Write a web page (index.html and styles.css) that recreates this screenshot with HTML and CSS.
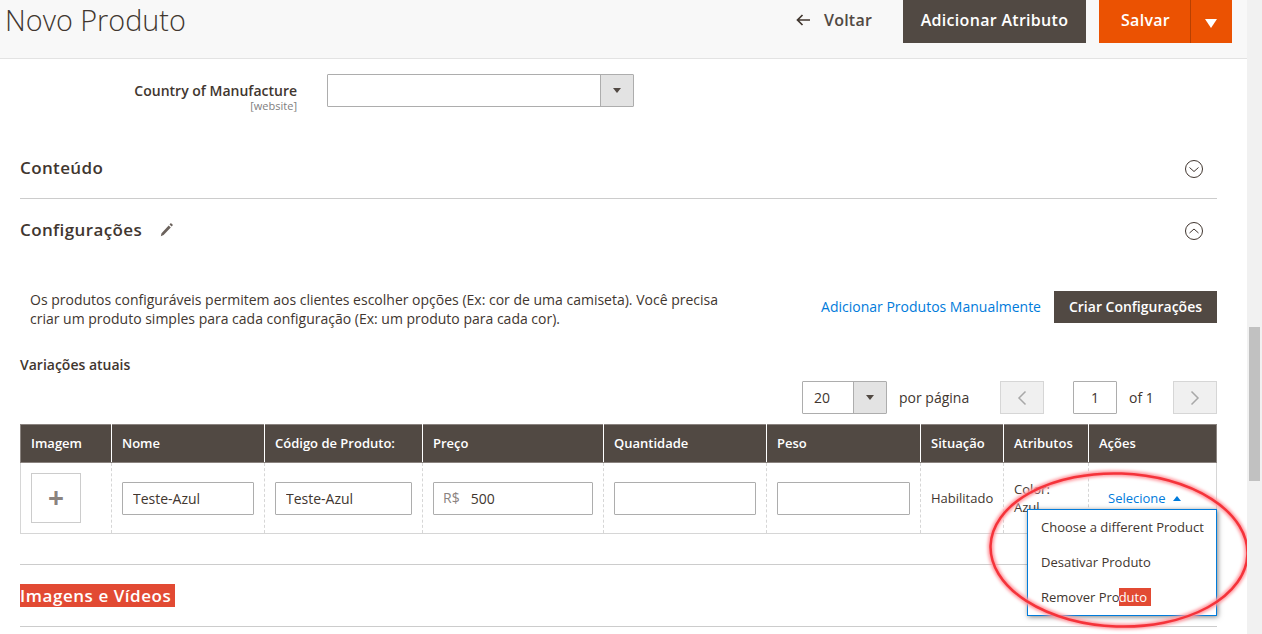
FILE: index.html
```html
<!DOCTYPE html>
<html lang="en">
<head>
  <meta charset="UTF-8" />
  <title>Novo Produto</title>
  <link rel="stylesheet" href="styles.css">
</head>
<body>

  <div class="page">
    <div class="page-main">

      <header class="page-header">
        <h1>Novo Produto</h1>
        <div class="page-actions">
          <a class="back-link">
            <svg width="14" height="12" viewBox="0 0 14 12"><path d="M6.500 1 1.500 6l5 5M1.500 6H14" fill="none" stroke="#41362f" stroke-width="1.700"/></svg>
            Voltar
          </a>
          <button class="btn-header btn-dark">Adicionar Atributo</button>
          <div class="save-group">
            <button class="btn-header btn-save">Salvar</button>
            <button class="btn-header btn-save-toggle"><span class="caret-white"></span></button>
          </div>
        </div>
      </header>

      <div class="content">
        <div class="field-row">
          <div class="field-label">
            <strong>Country of Manufacture</strong>
            <span>[website]</span>
          </div>
          <div class="select select-wide"><span class="select-value"></span><span class="select-btn"><i></i></span></div>
        </div>

        <div class="section section-closed">
          <h2>Conteúdo</h2>
          <svg class="toggle" width="20" height="20" viewBox="0 0 20 20"><circle cx="10" cy="10" r="8.500" fill="none" stroke="#41362f" stroke-width="1"/><path d="M5.500 8.500 10 12.500l4.500-4" fill="none" stroke="#41362f" stroke-width="1"/></svg>
        </div>

        <div class="section section-open">
          <h2>Configurações</h2>
          <svg class="pencil" width="14" height="16" viewBox="0 0 14 16"><path d="M.8 15.200l.7-3 7.200-7.800 2.100 2-7.200 7.700zM9.500 3.500 10.900 2l2.100 2-1.400 1.500z" fill="#6b625c"/></svg>
          <svg class="toggle" width="20" height="20" viewBox="0 0 20 20"><circle cx="10" cy="10" r="8.500" fill="none" stroke="#41362f" stroke-width="1"/><path d="M5.500 12 10 8l4.500 4" fill="none" stroke="#41362f" stroke-width="1"/></svg>
        </div>

        <div class="config-intro">
          <p>Os produtos configuráveis permitem aos clientes escolher opções (Ex: cor de uma camiseta). Você precisa criar um produto simples para cada configuração (Ex: um produto para cada cor).</p>
          <div class="config-actions">
            <a class="link">Adicionar Produtos Manualmente</a>
            <button class="btn-create">Criar Configurações</button>
          </div>
        </div>

        <h3 class="variations-title">Variações atuais</h3>

        <div class="pager">
          <div class="select select-small"><span class="select-value">20</span><span class="select-btn"><i></i></span></div>
          <span class="per-page">por página</span>
          <button class="page-btn page-prev"><svg width="10" height="16" viewBox="0 0 10 16"><path d="M8.500 1.500 2 8l6.500 6.500" fill="none" stroke="#a8a8a8" stroke-width="1.500"/></svg></button>
          <input class="page-input" type="text" value="1" />
          <span class="page-total">of 1</span>
          <button class="page-btn page-next"><svg width="10" height="16" viewBox="0 0 10 16"><path d="M1.500 1.500 8 8l-6.500 6.500" fill="none" stroke="#a8a8a8" stroke-width="1.500"/></svg></button>
        </div>

        <table class="grid">
          <colgroup>
            <col class="c-img"><col class="c-name"><col class="c-sku"><col class="c-price"><col class="c-qty"><col class="c-weight"><col class="c-status"><col class="c-attr"><col class="c-act">
          </colgroup>
          <thead>
            <tr>
              <th>Imagem</th>
              <th>Nome</th>
              <th>Código de Produto:</th>
              <th>Preço</th>
              <th>Quantidade</th>
              <th>Peso</th>
              <th>Situação</th>
              <th>Atributos</th>
              <th>Ações</th>
            </tr>
          </thead>
          <tbody>
            <tr>
              <td><div class="img-add">+</div></td>
              <td><input type="text" value="Teste-Azul" /></td>
              <td><input type="text" value="Teste-Azul" /></td>
              <td>
                <div class="price-input"><span>R$</span><input type="text" value="500" /></div>
              </td>
              <td><input type="text" /></td>
              <td><input type="text" /></td>
              <td>Habilitado</td>
              <td class="attr-cell">Color:<br>Azul</td>
              <td class="action-cell">
                <a class="link action-toggle">Selecione <span class="caret-up"></span></a>
                <ul class="action-menu">
                  <li>Choose a different Product</li>
                  <li>Desativar Produto</li>
                  <li>Remover Pro<span class="mark-inline">duto</span></li>
                </ul>
              </td>
            </tr>
          </tbody>
        </table>

        <div class="section section-images">
          <h2><span class="mark">Imagens e Vídeos</span></h2>
        </div>
      </div>

      <svg class="annotation" width="280" height="170" viewBox="0 0 280 170">
        <defs><filter id="soft"><feGaussianBlur stdDeviation="1.500"/></filter></defs>
        <ellipse cx="140" cy="85" rx="128.500" ry="76.500" transform="rotate(2 140 85)" fill="none" stroke="#ff9aa0" stroke-width="6" filter="url(#soft)"/>
        <ellipse cx="140" cy="85" rx="128.500" ry="76.500" transform="rotate(2 140 85)" fill="none" stroke="#f5333a" stroke-width="2.500"/>
      </svg>
    </div>

    <div class="scrollbar"><div class="scroll-thumb"></div></div>
  </div>

</body>
</html>
```

FILE: styles.css
```css
* {
  margin: 0;
  padding: 0;
  box-sizing: border-box;
  font-family: 'Open Sans', 'Noto Sans', sans-serif;
}

html, body {
  height: 634px;
  overflow: hidden;
}

body {
  background: #fff;
  color: #41362f;
  font-size: 14px;
}

button {
  border: none;
  cursor: pointer;
}

.page {
  display: flex;
  height: 634px;
}

.page-main {
  position: relative;
  flex: 1;
  min-width: 0;
  overflow: hidden;
}

/* header */

.page-header {
  display: flex;
  justify-content: space-between;
  height: 59px;
  padding: 0 15px 0 5px;
  background: #f8f8f8;
  border-bottom: 1px solid #e3e3e3;
}

.page-header h1 {
  font-size: 28.8px;
  font-weight: 300;
  line-height: 39px;
  color: #41362f;
}

.page-actions {
  display: flex;
  align-items: flex-start;
}

.back-link {
  display: flex;
  align-items: center;
  gap: 14px;
  height: 40px;
  margin-right: 31px;
  font-size: 16px;
  font-weight: 600;
  color: #514943;
  letter-spacing: .2px;
}

.btn-header {
  height: 43px;
  padding-bottom: 3px;
  font-size: 16px;
  font-weight: 600;
  color: #fff;
  letter-spacing: .3px;
}

.btn-dark {
  width: 183px;
  margin-right: 13px;
  background: #514943;
}

.save-group {
  display: flex;
}

.btn-save {
  width: 91px;
  padding-left: 2px;
  background: #eb5202;
}

.btn-save-toggle {
  width: 42px;
  padding: 1px 2px 0 0;
  background: #eb5202;
  border-left: 1px solid #b84002;
}

.caret-white {
  display: inline-block;
  border-top: 9px solid #fff;
  border-left: 6px solid transparent;
  border-right: 6px solid transparent;
}

/* form */

.content {
  padding: 0 30px 0 20px;
}

.field-row {
  display: flex;
  gap: 30px;
  margin-top: 15px;
}

.field-label {
  display: flex;
  flex-direction: column;
  align-items: flex-end;
  width: 277px;
  padding-top: 7px;
}

.field-label strong {
  font-size: 14px;
  font-weight: 600;
  line-height: 19px;
  color: #41362f;
}

.field-label span {
  font-size: 11px;
  line-height: 12px;
  color: #808080;
}

.select {
  display: flex;
  height: 33px;
  background: #fff;
  border: 1px solid #adadad;
  border-radius: 1px;
}

.select-wide {
  width: 307px;
}

.select-small {
  width: 85px;
}

.select-value {
  flex: 1;
  padding-left: 11px;
  line-height: 31px;
}

.select-btn {
  display: flex;
  align-items: center;
  justify-content: center;
  width: 33px;
  background: #e3e3e3;
  border-left: 1px solid #adadad;
}

.select-btn i {
  border-top: 5px solid #514943;
  border-left: 4px solid transparent;
  border-right: 4px solid transparent;
}

/* sections */

.section {
  display: flex;
  align-items: center;
  position: relative;
}

.section h2 {
  font-size: 17px;
  font-weight: 600;
  color: #41362f;
  letter-spacing: .38px;
}

.section-closed {
  height: 62px;
  margin-top: 25px;
  border-bottom: 1px solid #cccccc;
}

.section-closed h2 {
  padding-bottom: 1px;
}

.section-open {
  height: 62px;
}

.section-open h2 {
  padding-bottom: 2px;
}

.section-open .pencil {
  margin-left: 18px;
  margin-bottom: 2px;
}

.toggle {
  margin: 2px 13px 0 auto;
}

.config-intro {
  display: flex;
  justify-content: space-between;
  align-items: center;
  margin-top: 30px;
  padding-left: 10px;
  height: 32px;
}

.config-intro p {
  width: 710px;
  padding-top: 4px;
  line-height: 19px;
  color: #41362f;
}

.config-actions {
  display: flex;
  align-items: center;
  gap: 13px;
}

.link {
  color: #007bdb;
}

.config-actions .link {
  padding-bottom: 2px;
}

.btn-create {
  width: 163px;
  height: 32px;
  padding-bottom: 2px;
  background: #514943;
  color: #fff;
  font-size: 14px;
  font-weight: 600;
}

.variations-title {
  margin-top: 32px;
  font-size: 14px;
  font-weight: 600;
  line-height: 20px;
  color: #41362f;
}

/* pager */

.pager {
  display: flex;
  align-items: center;
  margin-top: 6px;
  padding-left: 782px;
  height: 33px;
}

.per-page {
  width: 113px;
  padding-left: 12px;
  color: #41362f;
}

.page-btn {
  display: flex;
  align-items: center;
  justify-content: center;
  width: 44px;
  height: 33px;
  background: #f0f0f0;
  border: 1px solid #d6d6d6;
}

.page-input {
  width: 44px;
  height: 33px;
  margin-left: 29px;
  text-align: center;
  font-size: 14px;
  color: #41362f;
  border: 1px solid #adadad;
  border-radius: 1px;
}

.page-total {
  width: 56px;
  padding-left: 12px;
  color: #41362f;
}

/* grid */

.grid {
  width: 1196px;
  margin-top: 10px;
  table-layout: fixed;
  border-collapse: collapse;
}

.c-img { width: 91px; }
.c-name { width: 153px; }
.c-sku { width: 158px; }
.c-price { width: 181px; }
.c-qty { width: 163px; }
.c-weight { width: 154px; }
.c-status { width: 83px; }
.c-attr { width: 85px; }
.c-act { width: 128px; }

.grid th {
  height: 38px;
  padding: 0 10px 2px;
  text-align: left;
  font-size: 13px;
  font-weight: 600;
  color: #fff;
  background: #514943;
  border: 1px solid #8a837f;
  border-left-color: #fff;
  border-right-color: #fff;
}

.grid th:first-child {
  border-left-color: #8a837f;
}

.grid th:last-child {
  border-right-color: #8a837f;
}

.grid td {
  height: 71px;
  padding: 0 10px;
  font-size: 13px;
  line-height: 18px;
  color: #41362f;
  border: 1px solid #d6d6d6;
  border-left-style: dashed;
  border-right-style: dashed;
}

.grid td:first-child {
  border-left-style: solid;
}

.grid td:last-child {
  border-right-style: solid;
}

.grid td input {
  width: 100%;
  height: 33px;
  padding: 0 10px;
  font-size: 14px;
  color: #41362f;
  border: 1px solid #adadad;
  border-radius: 1px;
  outline: none;
}

.img-add {
  width: 50px;
  height: 50px;
  font-size: 28px;
  font-weight: 700;
  line-height: 46px;
  text-align: center;
  color: #8a837f;
  border: 1px solid #ccc;
}

.price-input {
  display: flex;
  align-items: center;
  height: 33px;
  border: 1px solid #adadad;
  border-radius: 1px;
}

.price-input span {
  padding-left: 9px;
  font-size: 14px;
  color: #8a837f;
}

.grid td .price-input input {
  flex: 1;
  min-width: 0;
  height: 31px;
  padding-left: 11px;
  border: none;
}

.grid td.action-cell {
  position: relative;
  padding-left: 19px;
}

.action-toggle {
  font-size: 13px;
  white-space: nowrap;
}

.caret-up {
  display: inline-block;
  margin: 0 0 2px 4px;
  border-bottom: 5px solid #007bdb;
  border-left: 4px solid transparent;
  border-right: 4px solid transparent;
}

.action-menu {
  position: absolute;
  top: 46px;
  right: -1px;
  width: 190px;
  height: 107px;
  padding-top: 1px;
  list-style: none;
  background: #fff;
  border: 1px solid #007bdb;
  box-shadow: 1px 1px 5px rgba(0, 0, 0, 0.5);
  z-index: 2;
}

.action-menu li {
  height: 35px;
  padding-left: 13px;
  font-size: 13px;
  line-height: 33px;
  color: #41362f;
  white-space: nowrap;
}

.mark-inline {
  display: inline-block;
  margin-left: -1px;
  line-height: 18px;
  padding-right: 4px;
  background: #e24a33;
  color: #fff;
}

.section-images {
  height: 63px;
  margin-top: 30px;
  border-top: 1px solid #cccccc;
  border-bottom: 1px solid #cccccc;
}

.section-images h2 {
  letter-spacing: .55px;
}

.mark {
  display: inline-block;
  line-height: 23px;
  padding-right: 4px;
  background: #e24a33;
  color: #fff;
}

/* hand-drawn circle on top of the screenshot */

.annotation {
  position: absolute;
  left: 979px;
  top: 465px;
  z-index: 3;
  pointer-events: none;
}

/* scrollbar */

.scrollbar {
  flex: 0 0 15px;
  padding: 327px 2px 0;
  background: #f1f1f1;
}

.scroll-thumb {
  height: 154px;
  background: #c1c1c1;
}
```
